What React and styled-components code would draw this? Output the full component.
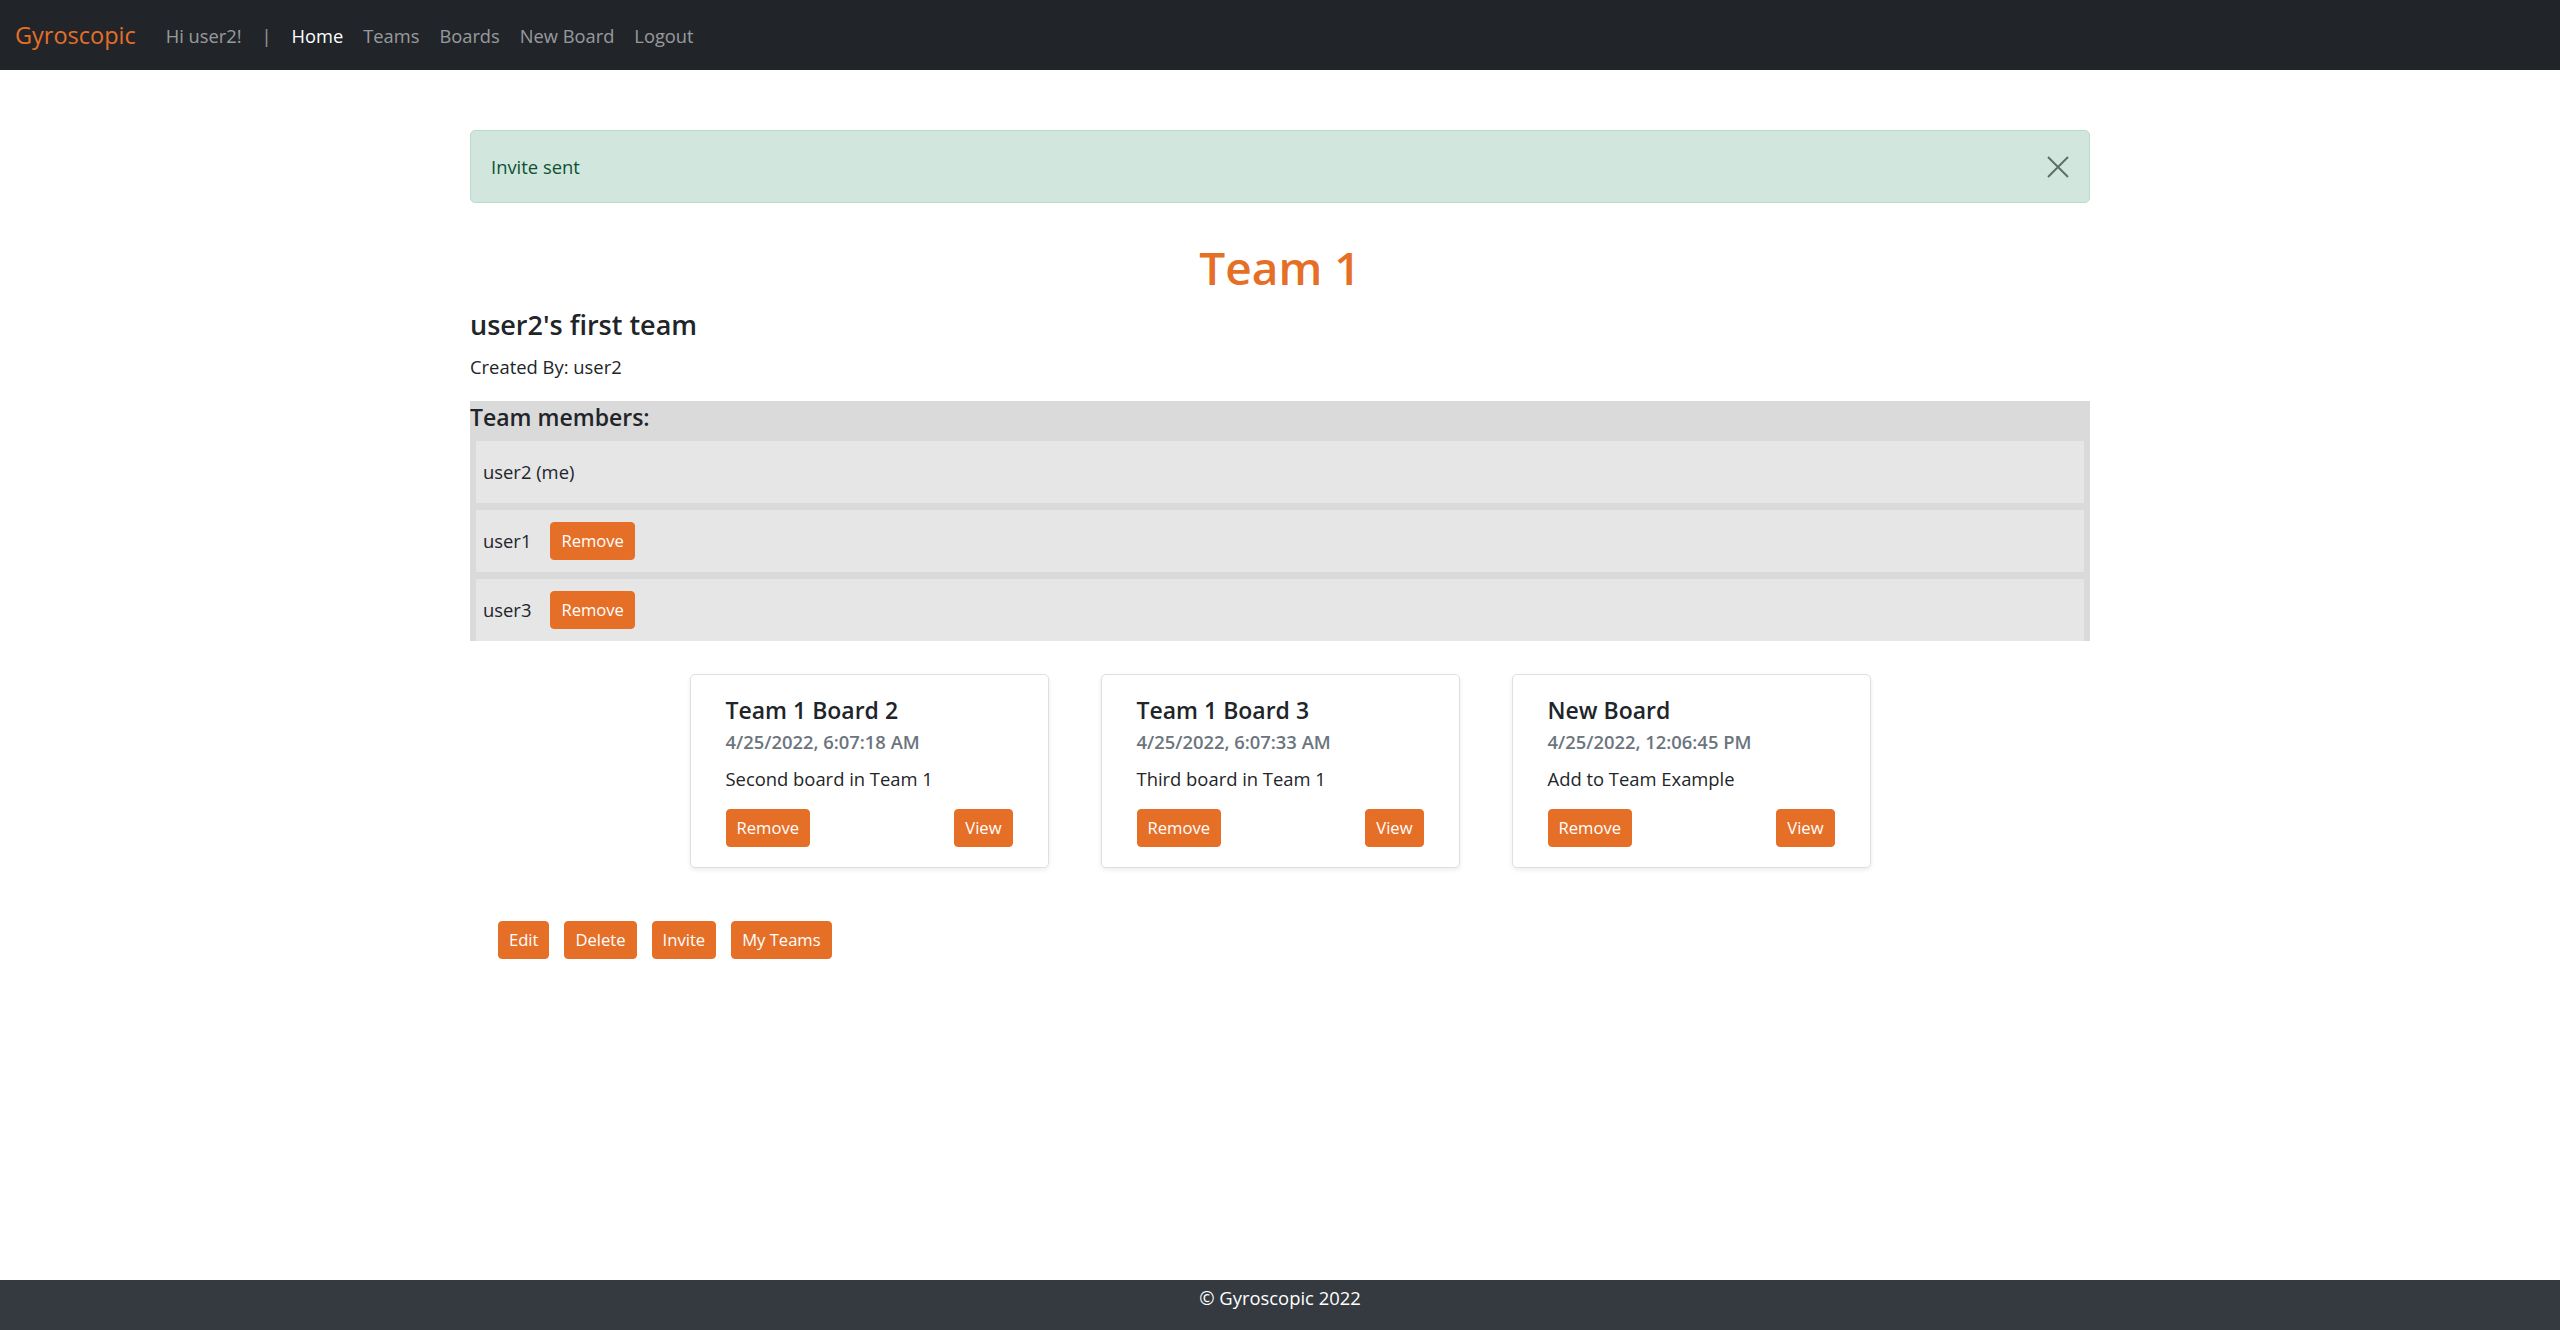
import React from 'react';
import styled, { createGlobalStyle } from 'styled-components';

const GlobalStyle = createGlobalStyle`
  * { box-sizing: border-box; }
  body {
    margin: 0;
    font-family: "Open Sans", "Noto Sans", sans-serif;
    font-size: 18.4px;
    color: #212529;
    background: #fff;
  }
`;

const orange = '#e66f28';

const Page = styled.div`
  min-height: 100vh;
  display: flex;
  flex-direction: column;
`;

const Navbar = styled.nav`
  height: 70px;
  background: #212529;
  display: flex;
  align-items: center;
  padding: 0 15px;
`;

const Brand = styled.a`
  color: ${orange};
  font-size: 23.5px;
  margin-right: 20px;
  text-decoration: none;
`;

const NavLink = styled.a`
  color: ${(props) => (props.active ? '#fff' : 'rgba(255,255,255,.55)')};
  padding: 0 10px;
  font-size: 18.3px;
  text-decoration: none;
`;

const Main = styled.main`
  flex: 1;
`;

const Container = styled.div`
  width: 1620px;
  margin: 0 auto;
`;

const Alert = styled.div`
  margin-top: 60px;
  height: 73px;
  padding: 0 20px;
  display: flex;
  align-items: center;
  justify-content: space-between;
  background: #d1e7dd;
  border: 1px solid #badbcc;
  border-radius: 5px;
  color: #0f5132;
`;

const CloseButton = styled.button`
  border: none;
  background: transparent;
  padding: 0;
  width: 22px;
  height: 22px;
  display: flex;
  cursor: pointer;
`;

const Title = styled.h1`
  margin: 37px 0 0;
  text-align: center;
  color: ${orange};
  font-size: 46px;
  font-weight: 600;
  line-height: 55px;
`;

const TeamName = styled.h4`
  margin: 13px 0 0;
  font-size: 27px;
  font-weight: 600;
  line-height: 33px;
`;

const Creator = styled.p`
  margin: 12px 0 0;
  line-height: 27.6px;
`;

const Members = styled.div`
  margin-top: 20px;
  background: #dadada;
`;

const MembersHeading = styled.h5`
  margin: 0 0 10px;
  padding-top: 2px;
  font-size: 23px;
  font-weight: 600;
  line-height: 28px;
`;

const MemberList = styled.ul`
  list-style: none;
  margin: 0;
  padding: 0 6px;
  display: flex;
  flex-direction: column;
  gap: 7px;
`;

const MemberItem = styled.li`
  height: 62px;
  padding: 0 7px;
  background: #e6e6e6;
  display: flex;
  align-items: center;
  gap: 19px;
`;

const Button = styled.button`
  background: ${orange};
  border: 1px solid ${orange};
  color: #fff;
  font-family: inherit;
  font-size: 16.6px;
  line-height: 26px;
  padding: 5px 10px;
  border-radius: 4px;
  cursor: pointer;
`;

const CardRow = styled.div`
  margin-top: 33px;
  display: flex;
  justify-content: center;
  gap: 52px;
`;

const Card = styled.div`
  width: 359px;
  height: 194px;
  padding: 22px 35px 20px;
  border: 1px solid rgba(0, 0, 0, 0.125);
  border-radius: 5px;
  box-shadow: 0 2px 5px rgba(0, 0, 0, 0.075);
  display: flex;
  flex-direction: column;
`;

const CardTitle = styled.h5`
  margin: 0;
  font-size: 23px;
  font-weight: 600;
  line-height: 27.6px;
`;

const CardDate = styled.h6`
  margin: 7px 0 0;
  font-size: 18.4px;
  font-weight: 600;
  line-height: 22px;
  color: #6c757d;
`;

const CardText = styled.p`
  margin: 12px 0 0;
  line-height: 27.6px;
`;

const CardActions = styled.div`
  margin-top: 16px;
  display: flex;
  justify-content: space-between;
`;

const ActionRow = styled.div`
  margin-top: 53px;
  padding-left: 28px;
  display: flex;
  gap: 15px;
`;

const Footer = styled.footer`
  height: 50px;
  padding-top: 3px;
  background: #343a40;
  color: #fff;
  text-align: center;
  line-height: 30px;
`;

const members = [
  { name: 'user2 (me)', removable: false },
  { name: 'user1', removable: true },
  { name: 'user3', removable: true },
];

const boards = [
  { title: 'Team 1 Board 2', date: '4/25/2022, 6:07:18 AM', text: 'Second board in Team 1' },
  { title: 'Team 1 Board 3', date: '4/25/2022, 6:07:33 AM', text: 'Third board in Team 1' },
  { title: 'New Board', date: '4/25/2022, 12:06:45 PM', text: 'Add to Team Example' },
];

const App = () => {
  return (
    <Page>
      <GlobalStyle />
      <Navbar>
        <Brand>Gyroscopic</Brand>
        <NavLink>Hi user2!</NavLink>
        <NavLink>|</NavLink>
        <NavLink active>Home</NavLink>
        <NavLink>Teams</NavLink>
        <NavLink>Boards</NavLink>
        <NavLink>New Board</NavLink>
        <NavLink>Logout</NavLink>
      </Navbar>
      <Main>
        <Container>
          <Alert>
            <span>Invite sent</span>
            <CloseButton aria-label="Close">
              <svg width="22" height="22" viewBox="0 0 22 22">
                <path d="M1 1L21 21M21 1L1 21" stroke="#5f6f68" strokeWidth="2" />
              </svg>
            </CloseButton>
          </Alert>
          <Title>Team 1</Title>
          <TeamName>user2's first team</TeamName>
          <Creator>Created By: user2</Creator>
          <Members>
            <MembersHeading>Team members:</MembersHeading>
            <MemberList>
              {members.map((m) => (
                <MemberItem key={m.name}>
                  <span>{m.name}</span>
                  {m.removable && <Button>Remove</Button>}
                </MemberItem>
              ))}
            </MemberList>
          </Members>
          <CardRow>
            {boards.map((b) => (
              <Card key={b.title}>
                <CardTitle>{b.title}</CardTitle>
                <CardDate>{b.date}</CardDate>
                <CardText>{b.text}</CardText>
                <CardActions>
                  <Button>Remove</Button>
                  <Button>View</Button>
                </CardActions>
              </Card>
            ))}
          </CardRow>
          <ActionRow>
            <Button>Edit</Button>
            <Button>Delete</Button>
            <Button>Invite</Button>
            <Button>My Teams</Button>
          </ActionRow>
        </Container>
      </Main>
      <Footer>© Gyroscopic 2022</Footer>
    </Page>
  );
};

export default App;
